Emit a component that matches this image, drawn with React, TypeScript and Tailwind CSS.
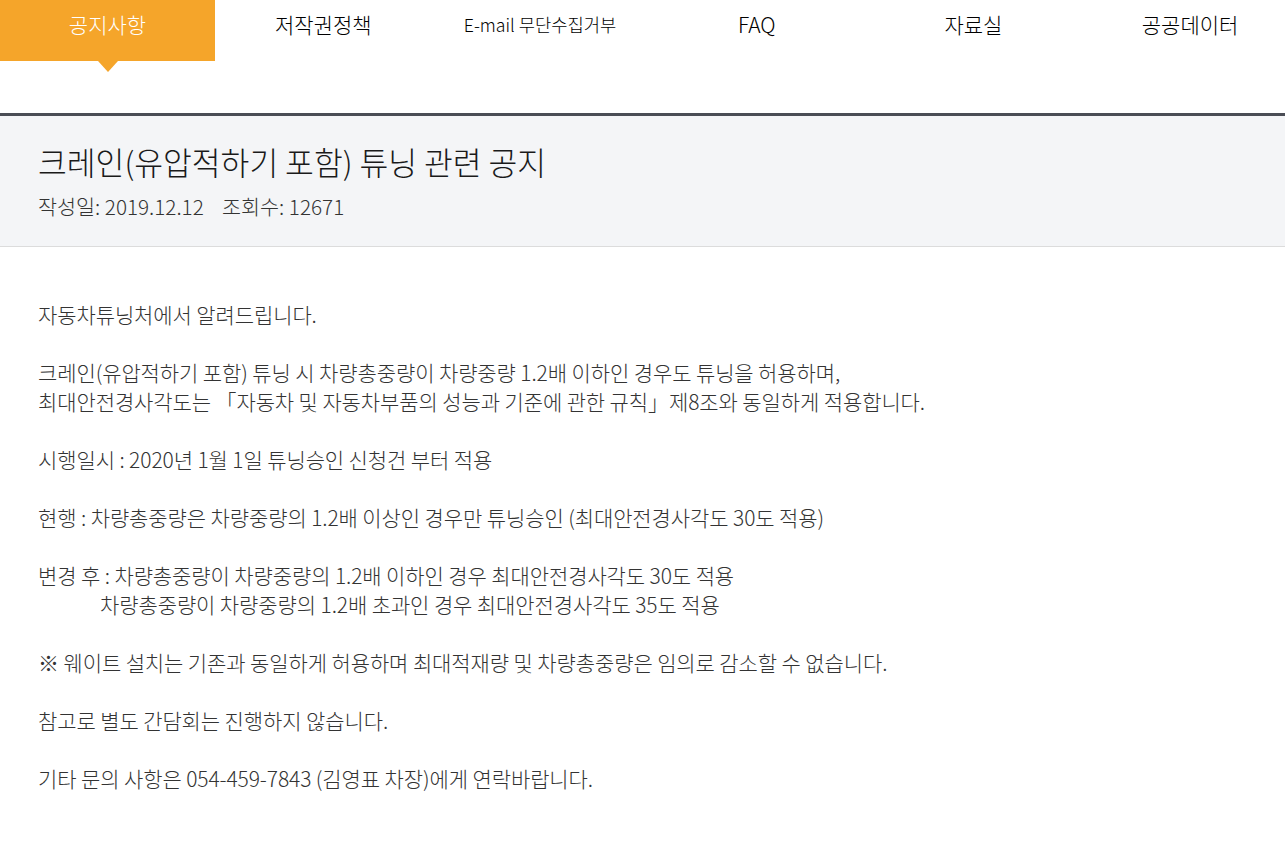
import React from "react";

const tabs = ["공지사항", "저작권정책", "E-mail 무단수집거부", "FAQ", "자료실", "공공데이터"];

const lines: (string | null)[] = [
  "자동차튜닝처에서 알려드립니다.",
  null,
  "크레인(유압적하기 포함) 튜닝 시 차량총중량이 차량중량 1.2배 이하인 경우도 튜닝을 허용하며,",
  "최대안전경사각도는 「자동차 및 자동차부품의 성능과 기준에 관한 규칙」제8조와 동일하게 적용합니다.",
  null,
  "시행일시 : 2020년 1월 1일 튜닝승인 신청건 부터 적용",
  null,
  "현행 : 차량총중량은 차량중량의 1.2배 이상인 경우만 튜닝승인 (최대안전경사각도 30도 적용)",
  null,
  "변경 후 : 차량총중량이 차량중량의 1.2배 이하인 경우 최대안전경사각도 30도 적용",
  "INDENT",
  null,
  "※ 웨이트 설치는 기존과 동일하게 허용하며 최대적재량 및 차량총중량은 임의로 감소할 수 없습니다.",
  null,
  "참고로 별도 간담회는 진행하지 않습니다.",
  null,
  "기타 문의 사항은 054-459-7843 (김영표 차장)에게 연락바랍니다.",
];

const light = { fontFamily: '"Noto Sans CJK KR Light", "Noto Sans CJK KR DemiLight", "Noto Sans CJK KR", "Noto Sans", sans-serif' };

export default function App() {
  return (
    <div className="w-[1285px] min-h-[864px] bg-white overflow-hidden font-light" style={light}>
      <nav className="flex h-[61px]">
        {tabs.map((t, i) => (
          <div
            key={t}
            className={
              i === 0
                ? "relative shrink-0 w-[215px] bg-[#f5a52a] text-white text-center text-[21px] leading-[28px] pt-[10px]"
                : i === 2
                ? "relative shrink-0 w-[216.7px] text-[#000] text-center text-[17.7px] leading-[28px] pt-[10px]"
                : "relative shrink-0 w-[216.7px] text-[#000] text-center text-[21px] leading-[28px] pt-[10px]"
            }
          >
            {t}
            {i === 0 && (
              <span className="absolute left-1/2 top-full -translate-x-1/2 w-0 h-0 border-l-[10px] border-r-[10px] border-t-[11px] border-l-transparent border-r-transparent border-t-[#f5a52a]" />
            )}
          </div>
        ))}
      </nav>
      <div className="h-[52px]" />
      <div className="border-t-[3px] border-[#4a4d55] bg-[#f4f5f7] border-b border-b-[#dcdcdc] px-[38px] pt-[25px] pb-[25px]">
        <h1 className="text-[31.3px] leading-[42px] text-[#1a1a1a]">
          크레인(유압적하기 포함) 튜닝 관련 공지
        </h1>
        <div className="mt-[8px] text-[20.7px] leading-[30px] text-[#333]">
          작성일: 2019.12.12&nbsp;&nbsp;&nbsp;&nbsp;조회수: 12671
        </div>
      </div>
      <div className="px-[38px] pt-[53px] pb-[40px] text-[21px] leading-[29px] text-[#333] tracking-[-0.1px]">
        {lines.map((l, i) =>
          l === null ? (
            <div key={i} className="h-[29px]" />
          ) : l === "INDENT" ? (
            <div key={i} className="pl-[62px]">
              차량총중량이 차량중량의 1.2배 초과인 경우 최대안전경사각도 35도 적용
            </div>
          ) : (
            <div key={i}>{l}</div>
          )
        )}
      </div>
    </div>
  );
}
